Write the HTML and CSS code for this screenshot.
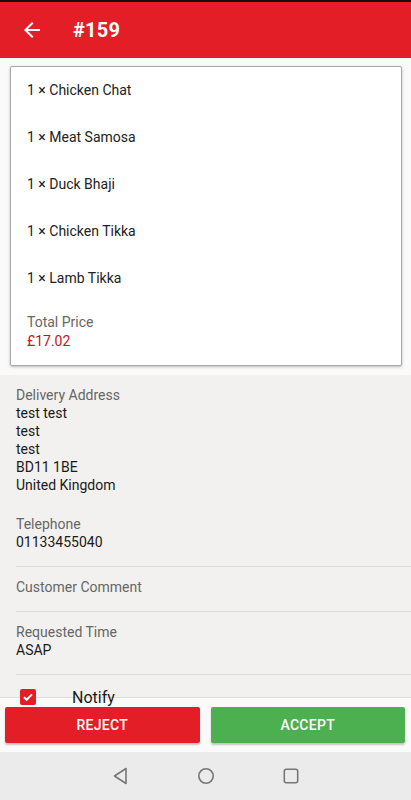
FILE: index.html
```html
<!DOCTYPE html>
<html>
<head>
<meta charset="utf-8">
<link rel="stylesheet" href="styles.css">
</head>
<body>
<div class="screen">
  <div class="statusline"></div>
  <header class="appbar">
    <svg class="back" viewBox="0 0 24 24" width="24" height="24"><path d="M20 11H7.83l5.59-5.59L12 4l-8 8 8 8 1.41-1.41L7.83 13H20v-2z" fill="#fff"/></svg>
    <h1 class="title">#159</h1>
  </header>
  <main class="content">
    <section class="card-wrap">
      <div class="card">
        <div class="item">1 × Chicken Chat</div>
        <div class="item">1 × Meat Samosa</div>
        <div class="item">1 × Duck Bhaji</div>
        <div class="item">1 × Chicken Tikka</div>
        <div class="item">1 × Lamb Tikka</div>
        <div class="total">
          <div class="label">Total Price</div>
          <div class="price">£17.02</div>
        </div>
      </div>
    </section>
    <section class="details">
      <div class="block first">
        <div class="label">Delivery Address</div>
        <div class="value">test test</div>
        <div class="value">test</div>
        <div class="value">test</div>
        <div class="value">BD11 1BE</div>
        <div class="value">United Kingdom</div>
      </div>
      <div class="block divided">
        <div class="label">Telephone</div>
        <div class="value">01133455040</div>
      </div>
      <div class="block divided">
        <div class="label">Customer Comment</div>
      </div>
      <div class="block divided">
        <div class="label">Requested Time</div>
        <div class="value">ASAP</div>
      </div>
    </section>
    <div class="notify">
      <span class="checkbox"><svg viewBox="0 0 16 16" width="16" height="16"><path d="M4 8.3l2.6 2.5L12 5.4" fill="none" stroke="#fff" stroke-width="2"/></svg></span>
      <span class="notify-text">Notify</span>
    </div>
  </main>
  <footer class="actions">
    <button class="btn reject">REJECT</button>
    <button class="btn accept">ACCEPT</button>
  </footer>
  <nav class="navbar">
    <svg viewBox="0 0 20 20" width="20" height="20"><path d="M15 2.5v15L3.5 10z" fill="none" stroke="#777" stroke-width="1.6" stroke-linejoin="round"/></svg>
    <svg viewBox="0 0 20 20" width="20" height="20"><circle cx="10" cy="10" r="7.2" fill="none" stroke="#777" stroke-width="1.6"/></svg>
    <svg viewBox="0 0 20 20" width="20" height="20"><rect x="3.3" y="3.3" width="13.4" height="13.4" rx="2" fill="none" stroke="#777" stroke-width="1.6"/></svg>
  </nav>
</div>
</body>
</html>
```
FILE: styles.css
```css
* { box-sizing: border-box; }
html, body { margin: 0; padding: 0; }
body {
  font-family: Roboto, "Noto Sans", "Liberation Sans", sans-serif;
  color: #1f1f1f;
  background: #ebebeb;
}
.screen {
  width: 411px;
  height: 800px;
  display: flex;
  flex-direction: column;
  overflow: hidden;
}
.statusline { height: 2px; background: #111; flex: none; }
.appbar {
  flex: none;
  height: 56px;
  background: #e31e26;
  display: flex;
  align-items: center;
  padding-left: 20px;
}
.back { display: block; }
.title {
  margin: 0 0 0 29px;
  color: #fff;
  font-size: 20px;
  font-weight: 700;
  letter-spacing: 0.2px;
}
.content {
  flex: 1;
  overflow: hidden;
  background: #f2f1ef;
}
.card-wrap {
  background: #fafafa;
  padding: 8px 9px 9px 10px;
}
.card {
  background: #fff;
  border: 1px solid #a8a8a8;
  border-radius: 2px;
  box-shadow: 0 1px 3px rgba(0,0,0,0.25);
  height: 300px;
}
.item {
  height: 47px;
  display: flex;
  align-items: center;
  padding-left: 16px;
  padding-bottom: 1px;
  font-size: 14px;
  color: #222;
}
.total { padding: 11px 16px 0; }
.label {
  font-size: 14px;
  line-height: 18px;
  color: #666;
}
.total .label { line-height: 19px; }
.price {
  font-size: 14px;
  line-height: 19px;
  color: #c4121a;
}
.details { padding-left: 16px; }
.block { padding: 11px 0 15px; }
.block.first { padding-bottom: 10px; }
.block.divided + .block.divided { border-top: 1px solid #dcdcdc; }
.block.divided:last-child { border-bottom: 1px solid #dcdcdc; }
.value {
  font-size: 14px;
  line-height: 18px;
  color: #1a1a1a;
}
.notify {
  display: flex;
  align-items: center;
  height: 44px;
  padding-left: 20px;
  background: linear-gradient(to bottom, #f2f1ef 0, #f2f1ef 22px, #dedede 22px, #dedede 23px, #fafafa 23px);
}
.checkbox {
  width: 16px;
  height: 16px;
  border-radius: 2px;
  background: #e31e26;
  display: block;
}
.checkbox svg { display: block; }
.notify-text {
  margin-left: 36px;
  font-size: 16px;
  color: #1a1a1a;
}
.actions {
  flex: none;
  height: 46px;
  background: #fafafa;
  display: flex;
  gap: 11px;
  padding: 1px 6px 9px 5px;
}
.btn {
  flex: 1;
  height: 36px;
  border: none;
  border-radius: 2px;
  color: #fff;
  font-family: Roboto, "Noto Sans", sans-serif;
  font-size: 14px;
  font-weight: 500;
  letter-spacing: 0.3px;
  box-shadow: 0 2px 2px rgba(0,0,0,0.22);
}
.reject { background: #e31e26; }
.accept { background: #4caf50; }
.navbar {
  flex: none;
  height: 48px;
  background: #ebebeb;
  display: flex;
  align-items: center;
  justify-content: center;
  gap: 65px;
}
.navbar svg { display: block; }
```
